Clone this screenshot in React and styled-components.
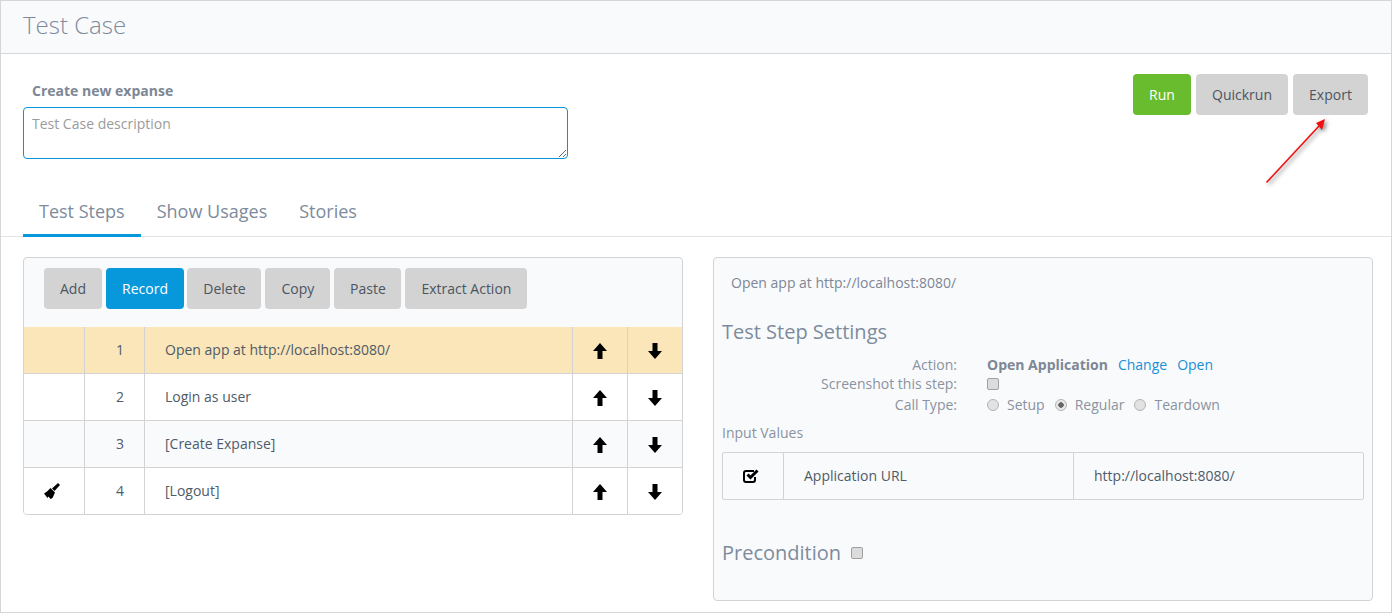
import React from "react";
import styled, { createGlobalStyle } from "styled-components";

const GlobalStyle = createGlobalStyle`
  * {
    box-sizing: border-box;
  }
  body {
    margin: 0;
    background: #fff;
    font-family: "Open Sans", "Liberation Sans", sans-serif;
    font-size: 14px;
    color: #4f5b69;
  }
`;

const Page = styled.div`
  position: relative;
  width: 1392px;
  height: 613px;
  overflow: hidden;
  border: 1px solid #d6d6d6;
`;

const Header = styled.header`
  height: 53px;
  padding: 7px 22px 0;
  background: #f9fafc;
  border-bottom: 1px solid #d6d8dc;
`;

const Title = styled.h1`
  margin: 0;
  font-size: 24px;
  line-height: 33px;
  font-weight: 300;
  color: #7d8a9b;
`;

const FormRow = styled.section`
  display: flex;
  justify-content: space-between;
  align-items: flex-start;
  height: 136px;
  padding: 20px 23px 0 22px;
`;

const Field = styled.div`
  display: flex;
  flex-direction: column;
  width: 545px;
  padding-top: 7px;
`;

const FieldLabel = styled.label`
  padding-left: 9px;
  margin-bottom: 7px;
  font-size: 14px;
  line-height: 19px;
  font-weight: 700;
  color: #7d8795;
`;

const Description = styled.textarea`
  display: block;
  width: 545px;
  height: 52px;
  padding: 6px 8px;
  border: 1px solid #0a94d8;
  border-radius: 4px;
  outline: none;
  font-family: inherit;
  font-size: 14px;
  line-height: 19px;

  &::placeholder {
    color: #9b9b9b;
    opacity: 1;
  }
`;

const ButtonRow = styled.div`
  display: flex;
  gap: ${(p) => p.$gap || 5}px;
`;

const colours = {
  plain: ["#d3d3d3", "#4c5561"],
  green: ["#68bc2d", "#fff"],
  blue: ["#0798dc", "#fff"],
};

const Button = styled.button`
  width: ${(p) => p.$width}px;
  height: 41px;
  padding: 0;
  border: 0;
  border-radius: 4px;
  background: ${(p) => colours[p.$kind || "plain"][0]};
  color: ${(p) => colours[p.$kind || "plain"][1]};
  font-family: inherit;
  font-size: 14px;
`;

const RecordButton = styled(Button)`
  margin-right: -0.6px;
`;

const Tabs = styled.nav`
  display: flex;
  height: 47px;
  padding-left: 22px;
  border-bottom: 1px solid #e2e3e5;
`;

const Tab = styled.div`
  height: 47px;
  padding: 9px 16px 0;
  font-size: 18px;
  line-height: 25px;
  color: #7d8b9c;
  border-bottom: 3px solid ${(p) => (p.$active ? "#0798dc" : "transparent")};
`;

const Panels = styled.div`
  display: flex;
  align-items: flex-start;
  gap: 30px;
  padding: 20px 18px 0 22px;
`;

const Panel = styled.section`
  width: 660px;
  height: ${(p) => p.$height}px;
  border: 1px solid #d3d3d3;
  border-radius: 4px;
  background: #f9fafc;
  overflow: hidden;
`;

const Toolbar = styled.div`
  height: 69px;
  padding: 10px 20px 0;
`;

const Row = styled.div`
  display: grid;
  grid-template-columns: 61px 60px 428px 55px 54px;
  height: ${(p) => (p.$last ? 46 : 47)}px;
  border-bottom: ${(p) => (p.$last ? "0" : "1px solid #d3d3d3")};
  background: ${(p) => p.$bg};
`;

const Cell = styled.div`
  display: flex;
  align-items: center;
  justify-content: ${(p) => (p.$left ? "flex-start" : "center")};
  padding-left: ${(p) => (p.$left ? "20px" : "0")};
  padding-bottom: 1px;
  color: #4f5b69;
  line-height: 19px;
  border-right: ${(p) => (p.$end ? "0" : "1px solid #d3d3d3")};
`;

const NumberCell = styled(Cell)`
  padding-left: 11px;
`;

const Summary = styled.div`
  padding: 15px 17px 0;
  height: 60px;
  line-height: 19px;
  color: #7d8795;
`;

const Section = styled.div`
  padding: 0 8px;
`;

const Heading = styled.h3`
  display: flex;
  align-items: center;
  margin: 0;
  font-size: 20px;
  line-height: 27px;
  font-weight: 400;
  color: #7d8b9c;
`;

const Settings = styled.div`
  display: grid;
  grid-template-columns: 235px 1fr;
  column-gap: 30px;
  grid-template-rows: 19px 19px 21px;
  margin-top: 10px;
  line-height: 19px;
  color: #8a93a0;
`;

const SettingLabel = styled.div`
  align-self: end;
  text-align: right;
`;

const SettingValue = styled.div`
  display: flex;
  align-items: center;
  align-self: end;
  height: 19px;
`;

const Strong = styled.b`
  font-weight: 700;
  color: #7d8795;
`;

const ActionLink = styled.a`
  margin-left: ${(p) => p.$gap}px;
  color: #1b8fd6;
`;

const Box = styled.input`
  appearance: none;
  width: 12px;
  height: 12px;
  margin: ${(p) => p.$margin || "0"};
  border: 1px solid #a0a0a0;
  border-radius: 2px;
  background: #dcdcdc;
`;

const RadioMark = styled.input`
  appearance: none;
  width: 12px;
  height: 12px;
  margin: 0 8px 0 ${(p) => p.$gap}px;
  border: 1px solid #b4b4b4;
  border-radius: 50%;
  background: ${(p) =>
    p.checked
      ? "radial-gradient(circle, #666 0 2.5px, #e8e8e8 3px)"
      : "#e2e2e2"};
`;

const SmallTitle = styled.div`
  margin-top: 9px;
  line-height: 19px;
  color: #8a93a0;
`;

const InputTable = styled.div`
  display: grid;
  grid-template-columns: 61px 290px 1fr;
  width: 642px;
  height: 48px;
  margin-top: 10px;
  border: 1px solid #d3d3d3;
  border-radius: 2px;
`;

const PreconditionHeading = styled(Heading)`
  margin-top: 39px;
`;

const Arrow = styled.svg`
  position: absolute;
  left: 1258px;
  top: 112px;
  filter: drop-shadow(2px 2px 2px rgba(0, 0, 0, 0.5));
`;

const BroomIcon = styled.svg`
  margin-right: 4px;
`;

const CheckIcon = styled.svg`
  margin-right: 5px;
`;

const MoveIcon = styled.svg`
  margin-top: 2px;
  transform: ${(p) => (p.$down ? "scaleY(-1)" : "none")};
`;

const Glyph = ({ down }) => (
  <MoveIcon $down={down} width="14" height="16" viewBox="0 0 14 16">
    <path d="M7 0 L14 8 L9.5 8 L9.5 16 L4.5 16 L4.5 8 L0 8 Z" fill="#000" />
  </MoveIcon>
);

const Broom = () => (
  <BroomIcon width="16" height="16" viewBox="0 0 16 16">
    <path d="M14 0 L16 2 L10.5 8 L8 5.5 Z" fill="#000" />
    <path
      d="M6.5 5 L11 9.5 L8.5 15 L6.5 16 L4.5 13.5 L3.5 15 L0 10.5 L3 8.5 Z"
      fill="#000"
    />
  </BroomIcon>
);

const Check = () => (
  <CheckIcon width="16" height="14" viewBox="0 0 16 14">
    <path
      d="M11 2 H3 Q1 2 1 4 V11 Q1 13 3 13 H10 Q12 13 12 11 V8"
      stroke="#000"
      strokeWidth="2"
      fill="none"
    />
    <path d="M4.5 5.5 L7.5 8.5 L14.5 1.5" stroke="#000" strokeWidth="3" fill="none" />
  </CheckIcon>
);

const steps = [
  { id: 1, name: "Open app at http://localhost:8080/", bg: "#fae6b8" },
  { id: 2, name: "Login as user", bg: "#fff" },
  { id: 3, name: "[Create Expanse]", bg: "#f9fafc" },
  { id: 4, name: "[Logout]", bg: "#fff", broom: true },
];

const App = () => (
  <Page>
    <GlobalStyle />
    <Header>
      <Title>Test Case</Title>
    </Header>

    <FormRow>
      <Field>
        <FieldLabel>Create new expanse</FieldLabel>
        <Description placeholder="Test Case description" />
      </Field>
      <ButtonRow>
        <Button $kind="green" $width={58}>Run</Button>
        <Button $width={92}>Quickrun</Button>
        <Button $width={75}>Export</Button>
      </ButtonRow>
    </FormRow>

    <Tabs>
      <Tab $active>Test Steps</Tab>
      <Tab>Show Usages</Tab>
      <Tab>Stories</Tab>
    </Tabs>

    <Panels>
      <Panel $height={258}>
        <Toolbar>
          <ButtonRow $gap={4}>
            <Button $width={58}>Add</Button>
            <RecordButton $kind="blue" $width={78}>Record</RecordButton>
            <Button $width={74}>Delete</Button>
            <Button $width={65}>Copy</Button>
            <Button $width={67}>Paste</Button>
            <Button $width={122}>Extract Action</Button>
          </ButtonRow>
        </Toolbar>
        {steps.map((s, i) => (
          <Row key={s.id} $bg={s.bg} $last={i === steps.length - 1}>
            <Cell>{s.broom && <Broom />}</Cell>
            <NumberCell>{s.id}</NumberCell>
            <Cell $left>{s.name}</Cell>
            <Cell><Glyph /></Cell>
            <Cell $end><Glyph down /></Cell>
          </Row>
        ))}
      </Panel>

      <Panel $height={344}>
        <Summary>Open app at http://localhost:8080/</Summary>
        <Section>
          <Heading>Test Step Settings</Heading>
          <Settings>
            <SettingLabel>Action:</SettingLabel>
            <SettingValue>
              <Strong>Open Application</Strong>
              <ActionLink $gap={10}>Change</ActionLink>
              <ActionLink $gap={10}>Open</ActionLink>
            </SettingValue>
            <SettingLabel>Screenshot this step:</SettingLabel>
            <SettingValue>
              <Box type="checkbox" readOnly />
            </SettingValue>
            <SettingLabel>Call Type:</SettingLabel>
            <SettingValue>
              <RadioMark type="radio" readOnly $gap={0} />
              Setup
              <RadioMark type="radio" readOnly checked $gap={10} />
              Regular
              <RadioMark type="radio" readOnly $gap={10} />
              Teardown
            </SettingValue>
          </Settings>
          <SmallTitle>Input Values</SmallTitle>
          <InputTable>
            <Cell><Check /></Cell>
            <Cell $left>Application URL</Cell>
            <Cell $left $end>http://localhost:8080/</Cell>
          </InputTable>
          <PreconditionHeading>
            Precondition
            <Box type="checkbox" readOnly $margin="0 0 0 10px" />
          </PreconditionHeading>
        </Section>
      </Panel>
    </Panels>

    <Arrow width="80" height="80" viewBox="0 0 80 80">
      <path d="M7.5 69.5 L60 13" stroke="#f01010" strokeWidth="1.6" fill="none" />
      <path d="M66 6 L63 17 L57 10 Z" fill="#f01010" />
    </Arrow>
  </Page>
);

export default App;
